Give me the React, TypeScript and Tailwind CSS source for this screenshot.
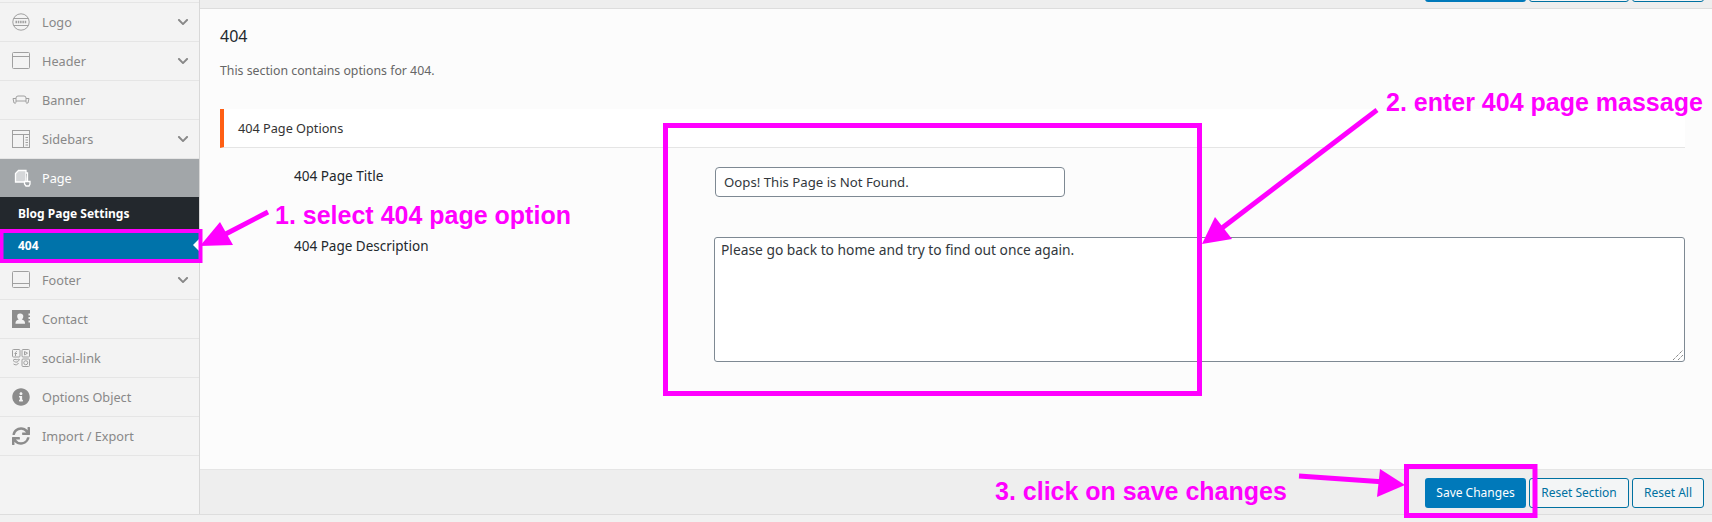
import React from "react";
import { FaChevronDown, FaInfoCircle, FaSync } from "react-icons/fa";

const I = ({ children }: { children: React.ReactNode }) => (
  <svg width="18" height="18" viewBox="0 0 18 18" fill="none" stroke="#a0a0a0" strokeWidth="1" className="shrink-0">
    {children}
  </svg>
);

const LogoIcon = () => (
  <I>
    <circle cx="9" cy="9" r="8.200" />
    <path d="M1.500 5.500h15M1.500 12.500h15" />
    <path d="M3.500 9h11" strokeWidth="2.400" strokeDasharray="1.500 .8" />
  </I>
);
const HeaderIcon = () => (
  <I>
    <rect x=".5" y=".5" width="17" height="16" rx="1" />
    <path d="M.5 4.500h17" />
  </I>
);
const BannerIcon = () => (
  <I>
    <path d="M4 11.500V7Q4 5 6 5H12Q14 5 14 7V11.500M4 10H14M1 7.500h3M14 7.500h3M1 7.500l1 4.500h2M17 7.500l-1 4.500h-2" />
  </I>
);
const SidebarsIcon = () => (
  <I>
    <rect x=".5" y=".5" width="17" height="17" />
    <path d="M.5 4.500h17M11.500 4.500v13M13.500 7.500h2.500M13.500 10h2.500M13.500 12.500h2.500M13.500 15h2.500" />
  </I>
);
const PageIcon = () => (
  <svg width="18" height="18" viewBox="0 0 18 18" fill="none" stroke="#ffffff" strokeWidth="1.300" className="shrink-0">
    <path d="M4.500 1.500H12V13H1.500V4.500z" fill="#d5d7d9" />
    <path d="M12 4h1.500v8.500M10.500 12.500h5.500v2.500l-1 2h-3l-1.500-2z" fill="#a2a6a9" />
  </svg>
);
const FooterIcon = () => (
  <I>
    <rect x=".5" y=".5" width="17" height="16" rx="1" />
    <path d="M.5 12.500h17" />
  </I>
);
const ContactIcon = () => (
  <svg width="18" height="18" viewBox="0 0 18 18" className="shrink-0">
    <path fill="#8c8c8c" fillRule="evenodd" d="M0 0h18v3.500h-1.500v2H18V7h-1.500v2H18v1.500h-1.500v2H18V18H0zM8 3.500a2.800 2.800 0 0 0-2.800 3c0 1.500 1 2.600 1.500 3-2 .5-3.200 1.500-3.200 3.500v.8h9.500V13c0-2-1.200-3-3.200-3.500.5-.4 1.500-1.500 1.500-3A2.800 2.800 0 0 0 8 3.500z" />
  </svg>
);
const SocialIcon = () => (
  <I>
    <rect x=".5" y=".5" width="7.500" height="7.500" rx="1" />
    <rect x="10" y=".5" width="7.500" height="7.500" rx="1" />
    <rect x="10" y="10" width="7.500" height="7.500" rx="1" />
    <circle cx="13.750" cy="13.750" r="2" />
    <path d="M12.500 2.500l3 1.700-3 1.700zM5 2.500c-1 0-1.500.6-1.500 1.500v3M2.500 4.500h2.500" />
    <path d="M1 11.500c2 2 4 2 5 1l1.500-2c-1-.5-2 0-2.500.5-1-1-3-1-4 .5zM1.500 15c2 1.500 4 1 5-1" />
  </I>
);

const rows = [
  { label: "Logo", icon: <LogoIcon />, chevron: true },
  { label: "Header", icon: <HeaderIcon />, chevron: true },
  { label: "Banner", icon: <BannerIcon /> },
  { label: "Sidebars", icon: <SidebarsIcon />, chevron: true },
];
const rows2 = [
  { label: "Footer", icon: <FooterIcon />, chevron: true },
  { label: "Contact", icon: <ContactIcon /> },
  { label: "social-link", icon: <SocialIcon /> },
  { label: "Options Object", icon: <FaInfoCircle size={18} color="#8c8c8c" className="shrink-0" /> },
  { label: "Import / Export", icon: <FaSync size={18} color="#8c8c8c" className="shrink-0" /> },
];

const Row = ({ label, icon, chevron }: { label: string; icon: React.ReactNode; chevron?: boolean }) => (
  <div className="h-[39px] flex items-center pl-[12px] pr-[10px] border-b border-[#e5e5e5] text-[12.700px] text-[#888888]">
    {icon}
    <span className="ml-[12px] flex-1 pt-[1px]">{label}</span>
    {chevron && <FaChevronDown size={12} color="#888888" />}
  </div>
);

const Buttons = ({ labels = true }: { labels?: boolean }) => (
  <div className="flex justify-end gap-[3px] pr-[8px] text-[12px]">
    <button className="w-[101px] h-[30px] rounded-[3px] bg-[#0079ba] text-white">{labels && "Save Changes"}</button>
    <button className="w-[100px] h-[30px] rounded-[3px] border border-[#0071a1] bg-[#f3f5f6] text-[#0071a1]">{labels && "Reset Section"}</button>
    <button className="w-[72px] h-[30px] rounded-[3px] border border-[#0071a1] bg-[#f3f5f6] text-[#0071a1]">{labels && "Reset All"}</button>
  </div>
);

export default function App() {
  return (
    <div className="relative w-[1712px] h-[522px] overflow-hidden bg-[#f1f1f1] font-['Noto_Sans',sans-serif]">
      <div className="flex h-[515px] border-b border-[#dddddd]">
        <aside className="w-[200px] shrink-0 bg-[#f3f3f3] border-r border-[#d8d8d8]">
          <div className="h-[3px] border-b border-[#e5e5e5]" />
          {rows.map((r) => (
            <Row key={r.label} {...r} />
          ))}
          <div className="h-[38px] flex items-center pl-[14px] bg-[#a2a6a9] text-[12.700px] text-white">
            <PageIcon />
            <span className="ml-[10px] pt-[1px]">Page</span>
          </div>
          <div className="bg-[#23282d] h-[32px] flex items-center pl-[18px] pt-[1px] text-[12px] font-bold text-white">
            Blog Page Settings
          </div>
          <div className="relative bg-[#0073aa] h-[32px] flex items-center pl-[18px] pt-[1px] text-[12px] font-bold text-white">
            404
            <span className="absolute right-0 top-[10px] border-y-[6px] border-r-[6px] border-y-transparent border-r-white" />
          </div>
          {rows2.map((r) => (
            <Row key={r.label} {...r} />
          ))}
        </aside>

        <main className="flex-1 flex flex-col bg-[#fcfcfc]">
          <div className="h-[9px] overflow-hidden bg-[#eeeeee] border-b border-[#dddddd]">
            <div className="-mt-[28px]">
              <Buttons labels={false} />
            </div>
          </div>

          <div className="flex-1 pl-[20px] pr-[27px]">
            <h2 className="mt-[16px] text-[16px] leading-[22px] font-normal text-[#23282d]">404</h2>
            <p className="mt-[14px] text-[12.300px] leading-[20px] text-[#666666]">This section contains options for 404.</p>
            <div className="mt-[28px] h-[39px] flex items-center pl-[14px] pt-[2px] bg-white border-l-[4px] border-l-[#ff5f14] border-b border-b-[#e5e5e5] text-[12.700px] text-[#333333]">
              404 Page Options
            </div>

            <div className="flex mt-[19px] h-[30px]">
              <div className="w-[74px] shrink-0" />
              <label className="w-[421px] shrink-0 text-[13.600px] leading-[18px] text-[#23282d]">404 Page Title</label>
              <div className="w-[350px] h-[30px] rounded-[4px] border border-[#7e8993] bg-white pl-[8px] text-[13.200px] leading-[28px] text-[#32373c]">
                Oops! This Page is Not Found.
              </div>
            </div>

            <div className="flex mt-[40px]">
              <div className="w-[74px] shrink-0" />
              <label className="w-[420px] shrink-0 text-[13.500px] leading-[18px] text-[#23282d]">404 Page Description</label>
              <div className="relative flex-1 h-[125px] rounded-[3px] border border-[#7e8993] bg-white px-[6px] py-[2px] text-[13.800px] leading-[20px] text-[#32373c]">
                Please go back to home and try to find out once again.
                <svg width="10" height="10" viewBox="0 0 10 10" stroke="#555555" strokeWidth="1" strokeDasharray="1 1" className="absolute right-[1px] bottom-[1px]">
                  <path d="M0 10L10 0M5 10L10 5" />
                </svg>
              </div>
            </div>
          </div>

          <div className="h-[45px] pt-[8px] bg-[#eeeeee] border-t border-[#e5e5e5]">
            <Buttons />
          </div>
        </main>
      </div>

      {/* Annotations drawn over the screenshot */}
      <svg width="1712" height="522" className="absolute left-0 top-0 pointer-events-none">
        <g fill="none" stroke="#ff00ff">
          <rect x="1.500" y="231" width="199" height="30" strokeWidth="4" />
          <rect x="665.500" y="125.500" width="534" height="268" strokeWidth="5" />
          <rect x="1406.500" y="466.500" width="128.500" height="49" strokeWidth="5" />
          <path d="M268 212L218 238" strokeWidth="5" />
          <path d="M1377 110L1222 228" strokeWidth="5" />
          <path d="M1299 476L1385 482" strokeWidth="5" />
        </g>
        <g fill="#ff00ff">
          <path d="M200 246L220 222L233 245z" />
          <path d="M1202 244L1215 217L1232 239z" />
          <path d="M1405 485L1380 469L1377 497z" />
        </g>
      </svg>
      <div className="absolute left-[275px] top-[201px] text-[25px] leading-[28px] font-bold text-[#ff00ff] font-['Liberation_Sans',sans-serif] whitespace-nowrap">1. select 404 page option</div>
      <div className="absolute left-[1386px] top-[88px] text-[25px] leading-[28px] font-bold text-[#ff00ff] font-['Liberation_Sans',sans-serif] whitespace-nowrap">2. enter 404 page massage</div>
      <div className="absolute left-[995px] top-[477px] text-[25px] leading-[28px] font-bold text-[#ff00ff] font-['Liberation_Sans',sans-serif] whitespace-nowrap">3. click on save changes</div>
    </div>
  );
}
